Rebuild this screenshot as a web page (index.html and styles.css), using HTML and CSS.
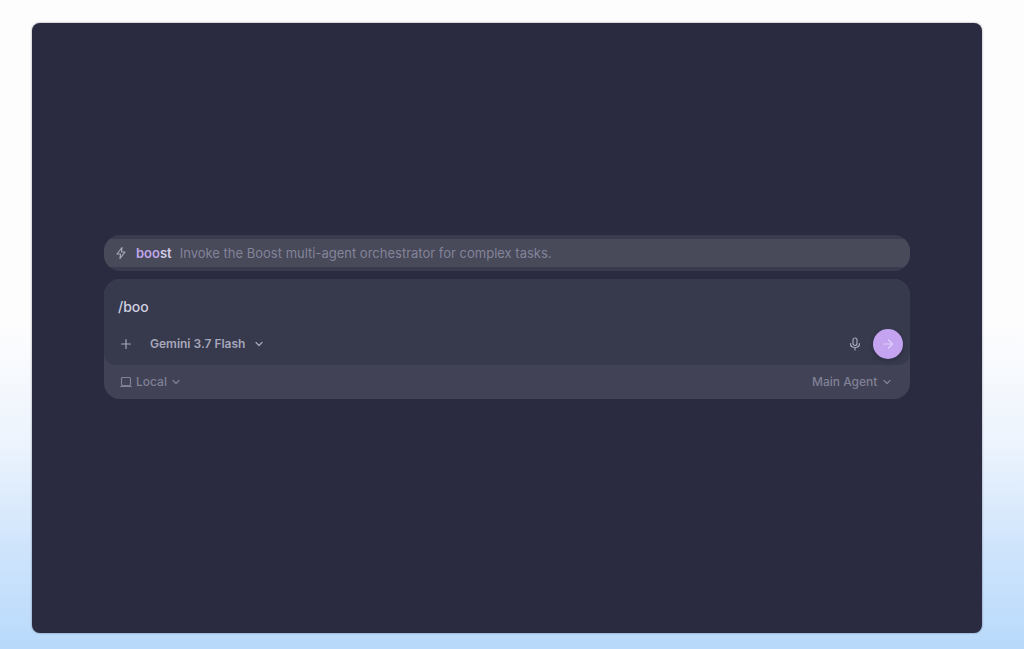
FILE: index.html
```html
<!DOCTYPE html>
<html lang="en">
<head>
    <meta charset="UTF-8">
    <meta name="viewport" content="width=device-width, initial-scale=1.0">
    <title>New conversation</title>
    <link rel="stylesheet" href="styles.css">
</head>
<body>

    <main class="window">
        <form class="prompt">
            <div class="suggestions">
                <button type="button" class="suggestion">
                    <svg class="icon bolt" viewBox="0 0 12 14" aria-hidden="true">
                        <path d="M7 1.5 L2 8 H5.5 L5 12.5 L10 6 H6.5 Z"/>
                    </svg>
                    <span class="command"><span class="match">boo</span>st</span>
                    <span class="description">Invoke the Boost multi-agent orchestrator for complex tasks.</span>
                </button>
            </div>

            <div class="composer">
                <div class="editor">
                    <input type="text" class="message" value="/boo" aria-label="Message">

                    <div class="toolbar">
                        <button type="button" class="icon-btn" aria-label="Add">
                            <svg class="icon plus" viewBox="0 0 12 12" aria-hidden="true">
                                <path d="M6 1.5 V10.5 M1.5 6 H10.5"/>
                            </svg>
                        </button>
                        <label class="picker model">
                            <select aria-label="Model">
                                <option>Gemini 3.7 Flash</option>
                            </select>
                            <svg class="icon chevron" viewBox="0 0 10 10" aria-hidden="true">
                                <path d="M2 3.5 L5 6.5 L8 3.5"/>
                            </svg>
                        </label>
                        <button type="button" class="icon-btn mic-btn" aria-label="Dictate">
                            <svg class="icon mic" viewBox="0 0 12 14" aria-hidden="true">
                                <rect x="4" y="1" width="4" height="7.5" rx="2"/>
                                <path d="M1.5 6.5 C1.5 9 3.5 10.5 6 10.5 S10.5 9 10.5 6.5 M6 10.5 V13"/>
                            </svg>
                        </button>
                        <button type="submit" class="send" aria-label="Send">
                            <svg class="icon arrow" viewBox="0 0 12 12" aria-hidden="true">
                                <path d="M1.5 6 H10.5 M6.5 2 L10.5 6 L6.5 10"/>
                            </svg>
                        </button>
                    </div>
                </div>

                <div class="context">
                    <label class="picker">
                        <svg class="icon laptop" viewBox="0 0 12 12" aria-hidden="true">
                            <rect x="1.5" y="1.5" width="9" height="8" rx="1"/>
                            <path d="M0.6 10.5 H11.4"/>
                        </svg>
                        <select aria-label="Environment">
                            <option>Local</option>
                        </select>
                        <svg class="icon chevron" viewBox="0 0 10 10" aria-hidden="true">
                            <path d="M2 3.5 L5 6.5 L8 3.5"/>
                        </svg>
                    </label>
                    <label class="picker">
                        <select aria-label="Agent">
                            <option>Main Agent</option>
                        </select>
                        <svg class="icon chevron" viewBox="0 0 10 10" aria-hidden="true">
                            <path d="M2 3.5 L5 6.5 L8 3.5"/>
                        </svg>
                    </label>
                </div>
            </div>
        </form>
    </main>

</body>
</html>
```
FILE: styles.css
```css
* {
    box-sizing: border-box;
}

body {
    margin: 0;
    min-height: 100vh;
    padding: 23px 42px 16px 32px;
    display: flex;
    font-family: Inter, "Liberation Sans", sans-serif;
    font-size: 12px;
    font-weight: 500;
    line-height: 18px;
    background: linear-gradient(#fdfdfe 0%, #fdfdfe 50%, #edf4fd 68%, #cee4fc 85%, #b8d9fb 100%);
}

button,
input,
select {
    font: inherit;
    color: inherit;
    background: none;
    border: none;
    margin: 0;
    padding: 0;
}

button,
select {
    cursor: pointer;
}

.window {
    flex: 1;
    display: flex;
    align-items: center;
    padding: 0 72px 22px;
    background-color: #2a2b40;
    border-radius: 8px;
    box-shadow: 0 0 2px rgba(42, 43, 64, 0.6);
}

.prompt {
    flex: 1;
    display: flex;
    flex-direction: column;
    gap: 8px;
}

/* Slash command list */
.suggestions {
    padding: 4px 0;
    background-color: #3b3b50;
    border-radius: 16px;
    overflow: hidden;
}

.suggestion {
    width: 100%;
    height: 28px;
    padding: 0 10px;
    display: flex;
    align-items: center;
    gap: 8px;
    background-color: #484959;
    font-size: 13px;
    font-weight: 400;
    text-align: left;
}

.command {
    color: #d3cde6;
    font-weight: 600;
}

.match {
    color: #bfa6ea;
}

.description {
    color: #83849a;
}

/* Message box */
.composer {
    background-color: #414255;
    border-radius: 16px;
    overflow: hidden;
}

.editor {
    padding: 16px 7px 6px 14px;
    background-color: #37394d;
    border-radius: 16px 16px 12px 12px;
}

.message {
    width: 100%;
    height: 22px;
    margin-bottom: 12px;
    display: block;
    color: #d0d1e2;
    font-size: 14px;
    font-weight: 500;
    outline: none;
}

.toolbar {
    display: flex;
    align-items: center;
    color: #a6a7ba;
}

.icon-btn {
    width: 16px;
    height: 16px;
    display: grid;
    place-items: center;
}

.picker {
    display: flex;
    align-items: center;
    gap: 4px;
}

.picker select {
    appearance: none;
    outline: none;
}

.model {
    margin-left: 16px;
    gap: 8px;
    font-weight: 600;
}

.mic-btn {
    margin-left: auto;
    margin-right: 10px;
}

.send {
    width: 30px;
    height: 30px;
    display: grid;
    place-items: center;
    color: #e0cdfb;
    background-color: #c4a4f0;
    border-radius: 50%;
    box-shadow: 0 2px 4px rgba(30, 30, 48, 0.4);
}

.context {
    padding: 8px 18px 8px 16px;
    display: flex;
    justify-content: space-between;
    color: #808196;
}

/* Icons */
.icon {
    fill: none;
    stroke: currentColor;
    stroke-width: 1.2;
    stroke-linecap: round;
    stroke-linejoin: round;
}

.bolt {
    width: 14px;
    height: 14px;
    color: #a6a6b8;
}

.plus,
.arrow,
.laptop {
    width: 12px;
    height: 12px;
}

.chevron {
    width: 10px;
    height: 10px;
}

.mic {
    width: 12px;
    height: 14px;
}
```
